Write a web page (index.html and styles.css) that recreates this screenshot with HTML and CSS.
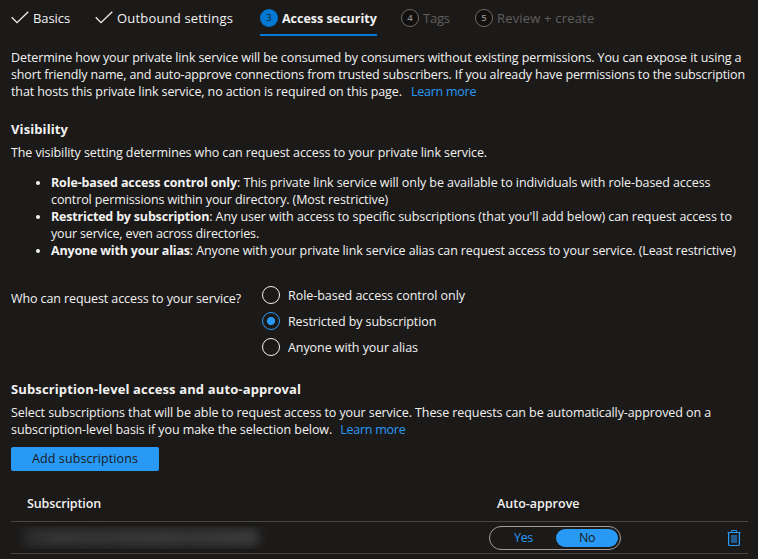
FILE: index.html
```html
<!DOCTYPE html>
<html lang="en">
<head>
<meta charset="utf-8">
<title>Create private link service</title>
<link rel="stylesheet" href="styles.css">
</head>
<body>
<nav class="steps">
  <a class="step step-basics"><svg class="check" viewBox="0 0 18 14"><path d="M0.7 6.3 6 11.6 17.3 0.8"/></svg><span>Basics</span></a>
  <a class="step step-outbound"><svg class="check" viewBox="0 0 18 14"><path d="M0.7 6.3 6 11.6 17.3 0.8"/></svg><span>Outbound settings</span></a>
  <a class="step step-access active"><i class="num">3</i><span>Access security</span></a>
  <a class="step step-tags pending"><i class="num">4</i><span>Tags</span></a>
  <a class="step step-review pending"><i class="num">5</i><span>Review + create</span></a>
</nav>
<main>
  <p class="intro">Determine how your private link service will be consumed by consumers without existing permissions. You can expose it using a<br><span class="tight">short friendly name, and auto-approve connections from trusted subscribers. If you already have permissions to the subscription</span><br>that hosts this private link service, no action is required on this page.<a class="link">Learn more</a></p>

  <h2 class="vis-title">Visibility</h2>
  <p>The visibility setting determines who can request access to your private link service.</p>
  <ul class="modes">
    <li><b>Role-based access control only</b><span class="loose">: This private link service will only be available to individuals with role-based access</span><br>control permissions within your directory. (Most restrictive)</li>
    <li><b class="tighter">Restricted by subscription</b><span class="loose">: Any user with access to specific subscriptions (that you'll add below) can request access to</span><br><span class="snug">your service, even across directories.</span></li>
    <li><b class="tighter">Anyone with your alias</b>: Anyone with your private link service alias can request access to your service. (Least restrictive)</li>
  </ul>

  <div class="question">
    <span class="label">Who can request access to your service?</span>
    <div class="radios">
      <label class="option"><i class="radio"></i><span class="wide">Role-based access control only</span></label>
      <label class="option"><i class="radio checked"></i><span>Restricted by subscription</span></label>
      <label class="option"><i class="radio"></i><span class="loose">Anyone with your alias</span></label>
    </div>
  </div>

  <h2 class="sub-title">Subscription-level access and auto-approval</h2>
  <p class="sub-text">Select subscriptions that will be able to request access to your service. These requests can be automatically-approved on a<br><span class="loose">subscription-level basis if you make the selection below.</span><a class="link">Learn more</a></p>
  <button class="add">Add subscriptions</button>

  <div class="table">
    <div class="row head"><span class="c1">Subscription</span><span class="c2">Auto-approve</span></div>
    <div class="row body">
      <div class="redacted"><i></i></div>
      <div class="toggle"><span class="yes">Yes</span><span class="no">No</span></div>
      <svg class="trash" viewBox="0 0 14 17"><path class="fill" d="M4 5h6v8H4z"/><path class="soft" d="M2.5 3.5v12h9v-12"/><path class="line" d="M0.5 2.5h13M4.5 2V0.5h5V2M1.5 3v12.5M12.5 3v12.5M2 15.5h10"/></svg>
    </div>
  </div>
</main>
</body>
</html>
```

FILE: styles.css
```css
* { box-sizing: border-box; }
body {
  margin: 0;
  height: 559px;
  overflow: hidden;
  background: #1b1a19;
  color: #f3f2f1;
  font: 12.5px/17px "Open Sans", "Noto Sans", sans-serif;
  letter-spacing: -0.1px;
  white-space: nowrap;
}
p, h2, ul { margin: 0; padding: 0; }
i { font-style: normal; }

.tight { letter-spacing: -0.126px; }
.tighter { letter-spacing: -0.185px; }
.snug { letter-spacing: -0.16px; }
.loose { letter-spacing: -0.071px; }
.wide { letter-spacing: -0.042px; }
.link { color: #2899f5; margin-left: 9px; letter-spacing: -0.24px; }

.steps { display: flex; height: 36px; padding: 9px 0 0 11px; font-size: 13px; letter-spacing: 0.18px; }
.step { display: flex; height: 27px; }
.step span { margin: 1px 0 0 4px; }
.step-basics { width: 84px; letter-spacing: -0.08px; }
.step-outbound { width: 165px; }
.step-access { width: 117px; margin-right: 24px; }
.step-tags { width: 74px; letter-spacing: -0.25px; }
.check { width: 18px; height: 14px; margin-top: 2px; fill: none; stroke: #f3f2f1; stroke-width: 1.3; }
.num {
  width: 18px; height: 18px;
  border-radius: 50%;
  font-size: 9.5px; line-height: 17px; text-align: center; letter-spacing: 0;
}
.active { border-bottom: 2px solid #0078d4; font-size: 12.5px; font-weight: 700; letter-spacing: 0; }
.active .num { background: #0078d4; color: #1b1a19; font-weight: 400; }
.pending { color: #605e5c; }
.pending .num { background: #11100f; border: 1px solid #6c6a68; color: #8a8886; line-height: 15px; font-weight: 600; }

main { padding-left: 11px; }
.intro { margin-top: 13px; letter-spacing: -0.106px; }
h2 { font-size: 13px; font-weight: 700; line-height: 18px; letter-spacing: 0.11px; }
.vis-title { margin: 20px 0 6px; }

.modes { margin-top: 13px; padding-left: 40px; letter-spacing: -0.108px; }
.modes b { letter-spacing: -0.135px; }
.modes b.tighter { letter-spacing: -0.185px; }

.question { display: flex; margin-top: 23px; }
.label { width: 251px; padding-top: 8px; }
.option { display: flex; height: 26px; align-items: center; }
.radio { width: 18px; height: 18px; margin: 0 8px 0 0; border: 1px solid #f3f2f1; border-radius: 50%; }
.radio.checked { border-color: #2899f5; background: radial-gradient(circle, #2899f5 3.7px, transparent 4.4px); }

.sub-title { margin: 20px 0 6px; letter-spacing: 0.13px; }
.sub-text { letter-spacing: -0.087px; }
.sub-text .link { margin-left: 8px; }
.add {
  display: block;
  width: 148px; height: 24px; margin-top: 9px; padding: 0 0 1px;
  border: 0; border-radius: 2px;
  background: #2899f5; color: #1b1a19;
  font: inherit; letter-spacing: 0.1px;
}

.table { width: 737px; margin-top: 17px; }
.row { display: flex; border-bottom: 1px solid #484644; }
.head { height: 34px; padding: 7px 0 0 16px; font-weight: 600; }
.head .c1 { width: 470px; letter-spacing: -0.13px; }
.head .c2 { letter-spacing: 0; }
.body { height: 32px; padding: 4px 7px 0 8px; }
.redacted { width: 256px; height: 23px; margin-right: 214px; overflow: hidden; background: linear-gradient(90deg, #1e1d1c 80%, #1b1a19); padding: 3px 17px 0 7px; }
.redacted i { display: block; height: 17px; background: linear-gradient(90deg, #2c2c2b, #363636 15%, #333 30%, #363636 45%, #383838 60%, #353535 70%, #3b3b3b 95%); filter: blur(5px); }
.toggle { display: flex; width: 132px; height: 24px; padding: 2px; border: 1px solid #a19f9d; border-radius: 12px; }
.yes, .no { line-height: 18px; text-align: center; letter-spacing: -0.4px; }
.yes { width: 64px; padding-right: 1px; color: #2899f5; }
.no { width: 62px; border-radius: 9px; background: #2899f5; color: #1b1a19; }
.trash { width: 14px; height: 17px; margin: 4px 0 0 auto; fill: none; stroke: #2899f5; }
.trash .fill { fill: #205c92; stroke: none; }
.trash .soft { stroke: #1c3a55; }
```
